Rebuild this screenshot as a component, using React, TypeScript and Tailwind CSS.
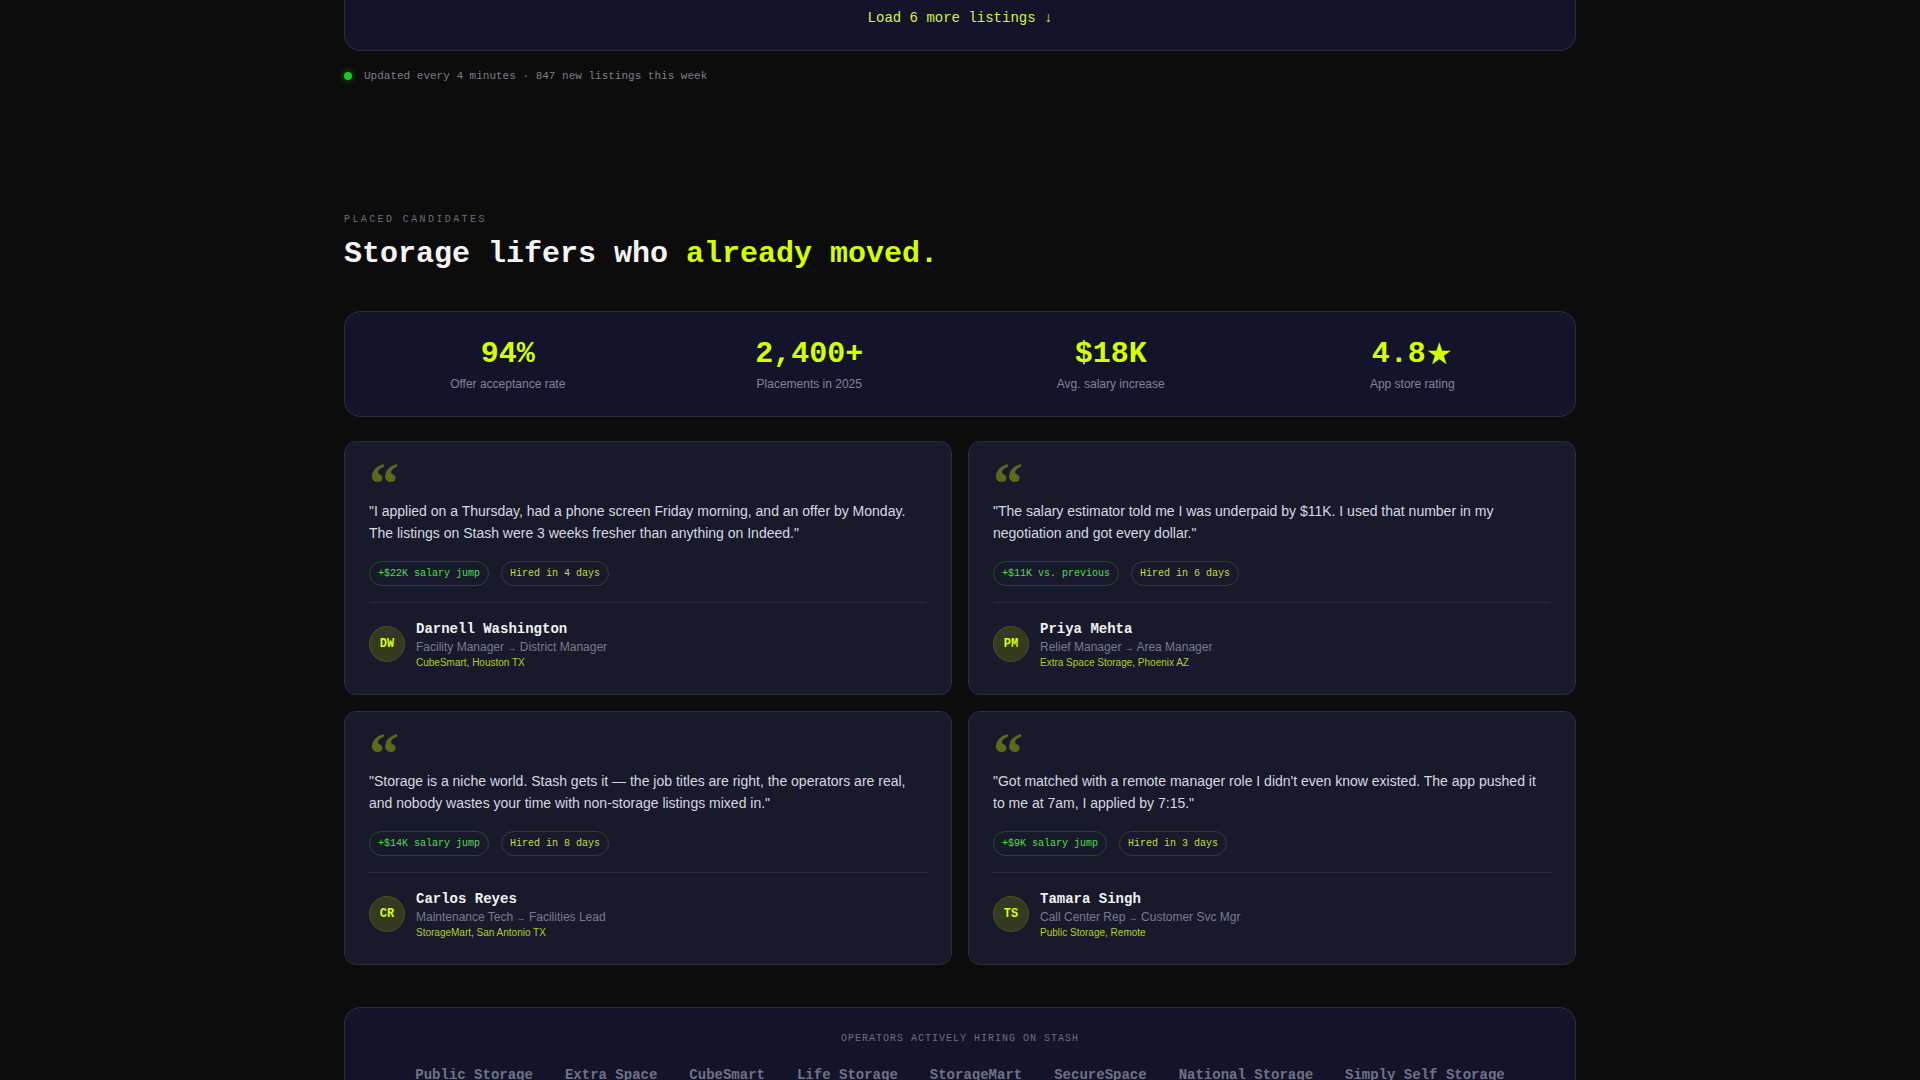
import React from "react";

const MONO = "font-['Liberation_Mono',monospace]";
const SANS = "font-['Liberation_Sans',Arial,sans-serif]";

interface Testimonial {
  quote: string;
  jump: string;
  hired: string;
  initials: string;
  name: string;
  from: string;
  to: string;
  company: string;
}

const testimonials: Testimonial[] = [
  {
    quote:
      "\"I applied on a Thursday, had a phone screen Friday morning, and an offer by Monday. The listings on Stash were 3 weeks fresher than anything on Indeed.\"",
    jump: "+$22K salary jump",
    hired: "Hired in 4 days",
    initials: "DW",
    name: "Darnell Washington",
    from: "Facility Manager",
    to: "District Manager",
    company: "CubeSmart, Houston TX",
  },
  {
    quote:
      "\"The salary estimator told me I was underpaid by $11K. I used that number in my negotiation and got every dollar.\"",
    jump: "+$11K vs. previous",
    hired: "Hired in 6 days",
    initials: "PM",
    name: "Priya Mehta",
    from: "Relief Manager",
    to: "Area Manager",
    company: "Extra Space Storage, Phoenix AZ",
  },
  {
    quote:
      "\"Storage is a niche world. Stash gets it — the job titles are right, the operators are real, and nobody wastes your time with non-storage listings mixed in.\"",
    jump: "+$14K salary jump",
    hired: "Hired in 8 days",
    initials: "CR",
    name: "Carlos Reyes",
    from: "Maintenance Tech",
    to: "Facilities Lead",
    company: "StorageMart, San Antonio TX",
  },
  {
    quote:
      "\"Got matched with a remote manager role I didn't even know existed. The app pushed it to me at 7am, I applied by 7:15.\"",
    jump: "+$9K salary jump",
    hired: "Hired in 3 days",
    initials: "TS",
    name: "Tamara Singh",
    from: "Call Center Rep",
    to: "Customer Svc Mgr",
    company: "Public Storage, Remote",
  },
];

const stats = [
  { value: "94%", label: "Offer acceptance rate" },
  { value: "2,400+", label: "Placements in 2025" },
  { value: "$18K", label: "Avg. salary increase" },
  { value: "4.8", star: true, label: "App store rating" },
];

const operators = [
  "Public Storage",
  "Extra Space",
  "CubeSmart",
  "Life Storage",
  "StorageMart",
  "SecureSpace",
  "National Storage",
  "Simply Self Storage",
];

function TestimonialCard({ t }: { t: Testimonial }) {
  return (
    <div className="rounded-xl border border-[#2a2c38] bg-[#181a2c] px-6 pt-6 pb-6">
      {/* big quote glyph, ink rises above its short line box */}
      <div className="pt-[8px] mb-[6px]">
        <span className="block h-[20px] font-['Liberation_Serif',serif] text-[60px] font-bold leading-[20px] text-[#5a691b]">
          “
        </span>
      </div>
      <p className={`${SANS} text-[14px] leading-[1.6] text-[#d6d8e0]`}>{t.quote}</p>
      <div className={`${MONO} mt-4 flex gap-3 text-[10px] leading-[13px]`}>
        <span className="rounded-full border border-[#1f4d26] px-2 py-[5px] text-[#4fdc4f]">{t.jump}</span>
        <span className="rounded-full border border-[#37392c] px-2 py-[5px] text-[#c6d84a]">{t.hired}</span>
      </div>
      <div className="mt-4 border-t border-[#2a2c38] pt-4 flex items-center gap-[11px]">
        <div
          className={`${MONO} flex h-9 w-9 shrink-0 items-center justify-center rounded-full border border-[#4a5026] bg-[#34391f] text-[12px] font-bold text-[#d4ff1a]`}
        >
          {t.initials}
        </div>
        <div className="flex flex-col">
          <span className={`${MONO} text-[14px] font-bold leading-5 text-[#f2f2f4]`}>{t.name}</span>
          <span className={`${SANS} text-[12px] leading-4 text-[#767a8e]`}>
            {t.from} <span className="text-[9px]">→</span> {t.to}
          </span>
          <span className={`${SANS} text-[10px] leading-[14px] text-[#b3cc24]`}>{t.company}</span>
        </div>
      </div>
    </div>
  );
}

export default function App() {
  return (
    <div className="min-h-screen bg-[#0c0c0c]">
      <div className="mx-auto w-[1232px]">
        {/* tail of the listings card */}
        <div className="flex h-[51px] items-end justify-center rounded-b-2xl border border-t-0 border-[#2a2c38] bg-[#13142a] pb-[22px]">
          <span className={`${MONO} text-[14px] leading-5 text-[#d4f53a]`}>Load 6 more listings ↓</span>
        </div>

        <div className="mt-[17px] flex items-center gap-3">
          <span className="h-2 w-2 rounded-full bg-[#22c522] shadow-[0_0_6px_#22c52299]" />
          <span className={`${MONO} text-[11px] leading-4 text-[#7b7e8a]`}>
            Updated every 4 minutes · 847 new listings this week
          </span>
        </div>

        {/* placed candidates */}
        <div className={`${MONO} mt-[128px] text-[10px] leading-4 tracking-[0.24em] text-[#6b6e7a]`}>
          PLACED CANDIDATES
        </div>
        <h2 className={`${MONO} mt-2 text-[30px] font-bold leading-9 text-[#f4f4f4]`}>
          Storage lifers who <span className="text-[#d4ff00]">already moved.</span>
        </h2>

        <div className="mt-[39px] grid grid-cols-4 rounded-2xl border border-[#2a2c38] bg-[#13142a] px-3 py-6">
          {stats.map((s) => (
            <div key={s.label} className="flex flex-col items-center">
              <span className={`${MONO} flex h-9 items-center text-[30px] font-bold leading-9 text-[#d4ff00]`}>
                {s.value}
                {s.star && <span className="font-['DejaVu_Sans',sans-serif] font-normal leading-9">★</span>}
              </span>
              <span className={`${SANS} mt-1 text-[12px] leading-4 text-[#80839a]`}>{s.label}</span>
            </div>
          ))}
        </div>

        <div className="mt-6 grid grid-cols-2 gap-4">
          {testimonials.map((t) => (
            <TestimonialCard key={t.name} t={t} />
          ))}
        </div>

        <div className="mt-[42px] rounded-2xl border border-[#2a2c38] bg-[#13142a] px-6 pt-[25px] pb-8">
          <div className={`${MONO} text-center text-[10px] leading-3 tracking-[0.1em] text-[#6b6e80]`}>
            OPERATORS ACTIVELY HIRING ON STASH
          </div>
          <div className={`${MONO} mt-5 flex justify-center gap-8 text-[14px] font-bold leading-5 text-[#6f7286]`}>
            {operators.map((o) => (
              <span key={o}>{o}</span>
            ))}
          </div>
        </div>
        <div className="h-16" />
      </div>
    </div>
  );
}
